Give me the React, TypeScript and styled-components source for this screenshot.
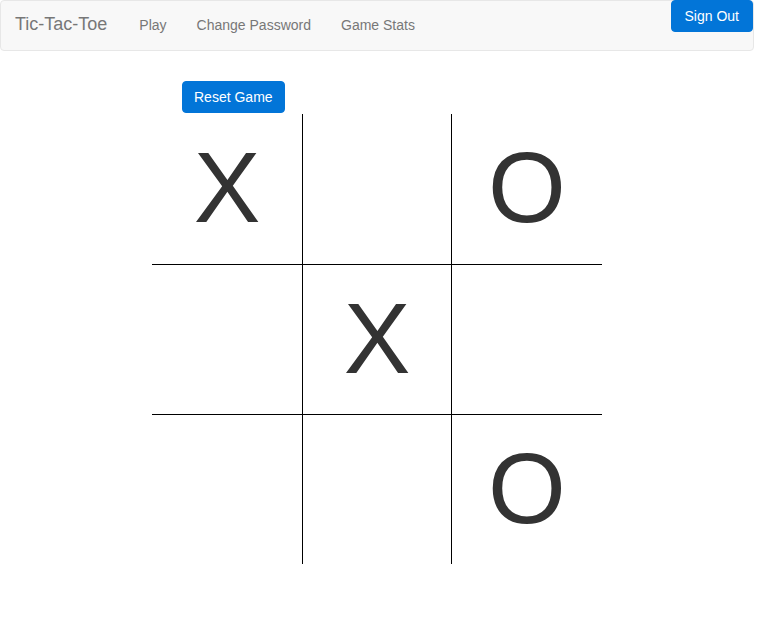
import React from "react";
import styled, { createGlobalStyle } from "styled-components";

const Global = createGlobalStyle`
  html, body { margin: 0; padding: 0; background: #fff; }
  body {
    font-family: "Liberation Sans", Arial, Helvetica, sans-serif;
    font-size: 14px;
    line-height: 20px;
    color: #333;
  }
  * { box-sizing: border-box; }
`;

const Navbar = styled.nav`
  display: flex;
  align-items: flex-start;
  height: 51px;
  width: 754px;
  background: #f8f8f8;
  border: 1px solid #e7e7e7;
  border-radius: 4px;
`;

const Brand = styled.a`
  padding: 13px 17px 15px 14px;
  font-size: 18px;
  line-height: 20px;
  color: #777;
  text-decoration: none;
`;

const NavLink = styled.a`
  padding: 14px 15px 15px;
  font-size: 14px;
  line-height: 20px;
  color: #777;
  text-decoration: none;
`;

const Spacer = styled.div`
  flex: 1;
`;

const Button = styled.button<{ $flush?: boolean }>`
  height: 32px;
  padding: ${(p) => (p.$flush ? "0 13px" : "0 11px")};
  margin: ${(p) => (p.$flush ? "-1px 0 0 0" : "0")};
  background: #0275d8;
  border: 1px solid #0275d8;
  border-radius: 4px;
  color: #fff;
  font-family: "Liberation Sans", Arial, Helvetica, sans-serif;
  font-size: 14px;
  line-height: 20px;
  cursor: pointer;
`;

const Main = styled.main`
  padding: 30px 0 0 152px;
  display: flex;
  flex-direction: column;
  align-items: flex-start;
`;

const ResetWrap = styled.div`
  padding-left: 30px;
  margin-bottom: 1px;
`;

const Board = styled.div`
  display: grid;
  grid-template-columns: 151px 149px 150px;
  grid-template-rows: 151px 150px 149px;
`;

const Cell = styled.div<{ $right: boolean; $bottom: boolean }>`
  display: flex;
  align-items: flex-start;
  justify-content: center;
  padding-top: 2px;
  border-right: ${(p) => (p.$right ? "1px solid #000" : "none")};
  border-bottom: ${(p) => (p.$bottom ? "1px solid #000" : "none")};
  font-family: "Liberation Sans", Arial, Helvetica, sans-serif;
  font-size: 100px;
  line-height: 142px;
  color: #333;
`;

const cells = ["X", "", "O", "", "X", "", "", "", "O"];

export default function App() {
  return (
    <>
      <Global />
      <Navbar>
        <Brand href="#">Tic-Tac-Toe</Brand>
        <NavLink href="#">Play</NavLink>
        <NavLink href="#">Change Password</NavLink>
        <NavLink href="#">Game Stats</NavLink>
        <Spacer />
        <Button $flush>Sign Out</Button>
      </Navbar>
      <Main>
        <ResetWrap>
          <Button>Reset Game</Button>
        </ResetWrap>
        <Board>
          {cells.map((c, i) => (
            <Cell key={i} $right={i % 3 < 2} $bottom={i < 6}>
              {c}
            </Cell>
          ))}
        </Board>
      </Main>
    </>
  );
}
